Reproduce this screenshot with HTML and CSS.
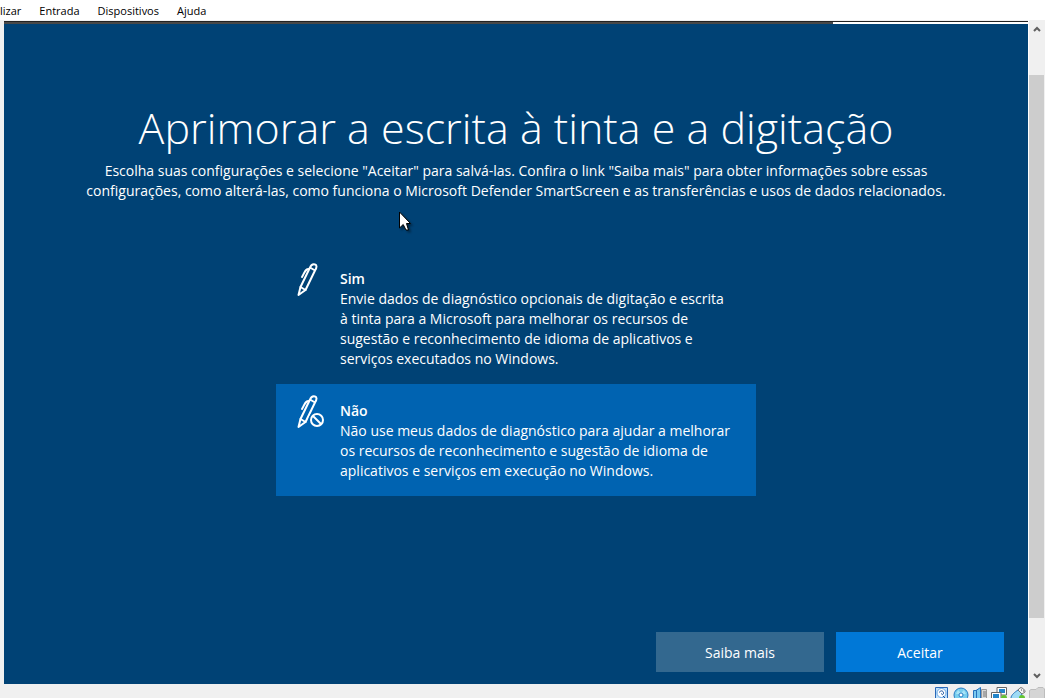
FILE: index.html
```html
<!DOCTYPE html>
<html lang="pt-BR">
<head>
<meta charset="utf-8">
<title>Aprimorar a escrita à tinta e a digitação</title>
<link rel="stylesheet" href="styles.css">
</head>
<body>
<nav class="menu">
  <button type="button" class="menu-item">lizar</button>
  <button type="button" class="menu-item">Entrada</button>
  <button type="button" class="menu-item">Dispositivos</button>
  <button type="button" class="menu-item">Ajuda</button>
</nav>
<div class="viewport">
  <main class="screen">
    <div class="topline"><div class="topline-dark"></div></div>
    <form class="setup">
      <h1 class="title">Aprimorar a escrita à tinta e a digitação</h1>
      <p class="intro">Escolha suas configurações e selecione "Aceitar" para salvá-las. Confira o link "Saiba mais" para obter informações sobre essas<br>configurações, como alterá-las, como funciona o Microsoft Defender SmartScreen e as transferências e usos de dados relacionados.</p>
      <div class="options">
        <label class="option">
          <input class="option-input" type="radio" name="ink" value="sim">
          <svg class="option-icon" viewBox="0 0 32 36" fill="none" stroke="#fff" stroke-width="2" stroke-linejoin="round" stroke-linecap="round">
            <path d="M14 4.500L19 7.500M14 4.500C15 2 17 1 19 1.500C21 2 21 4.500 19 7.500L9.500 27L2.500 32L4.500 24Z"/>
            <path d="M4.500 24L9.500 27M13 6C9 6 9 9 6 14"/>
          </svg>
          <span class="option-text"><strong class="option-name">Sim</strong>Envie dados de diagnóstico opcionais de digitação e escrita<br>à tinta para a Microsoft para melhorar os recursos de<br>sugestão e reconhecimento de idioma de aplicativos e<br>serviços executados no Windows.</span>
        </label>
        <label class="option">
          <input class="option-input" type="radio" name="ink" value="nao" checked>
          <svg class="option-icon" viewBox="0 0 32 36" fill="none" stroke="#fff" stroke-width="2" stroke-linejoin="round" stroke-linecap="round">
            <path d="M14 4.500L19 7.500M14 4.500C15 2 17 1 19 1.500C21 2 21 4.500 19 7.500L9.500 27L2.500 32L4.500 24Z"/>
            <path d="M4.500 24L9.500 27M13 6C9 6 9 9 6 14"/>
            <circle class="option-badge" cx="21" cy="25" r="8.500" stroke="none"/>
            <circle cx="21" cy="25" r="6"/>
            <path d="M17 21L25 29"/>
          </svg>
          <span class="option-text"><strong class="option-name">Não</strong>Não use meus dados de diagnóstico para ajudar a melhorar<br>os recursos de reconhecimento e sugestão de idioma de<br>aplicativos e serviços em execução no Windows.</span>
        </label>
      </div>
      <div class="actions">
        <button type="button" class="action">Saiba mais</button>
        <button type="button" class="action action-primary">Aceitar</button>
      </div>
    </form>
    <svg class="cursor" viewBox="0 0 12 20"><path d="M.500 1V17L4.200 13.500L7 19H9.500L7.500 12.500H11.500Z" fill="#fff" stroke="#000"/></svg>
  </main>
  <div class="scrollbar">
    <button type="button" class="scroll-button" aria-label="Rolar para cima"><svg class="scroll-arrow" viewBox="0 0 8 6"><path d="M1 5L4 2L7 5" fill="none" stroke="#606060" stroke-width="2"/></svg></button>
    <div class="scroll-track"><div class="scroll-thumb"></div></div>
    <button type="button" class="scroll-button" aria-label="Rolar para baixo"><svg class="scroll-arrow" viewBox="0 0 8 6"><path d="M1 1L4 4L7 1" fill="none" stroke="#606060" stroke-width="2"/></svg></button>
  </div>
</div>
<footer class="status">
  <svg class="status-icon" viewBox="0 0 16 11"><path d="M1.500 12V.500H13.500V12" fill="#bfe0fa" stroke="#2868b8"/><circle cx="7.500" cy="6" r="4.500" fill="#fff" stroke="#6aa6e4"/><path d="M5.500 5.500C6 3 9.500 3.500 9.500 6C9.500 8 7.500 8 7.500 6.500" fill="none" stroke="#174f9c"/><path d="M9 9L11 11" stroke="#174f9c"/></svg>
  <svg class="status-icon" viewBox="0 0 16 11"><circle cx="8" cy="8" r="7" fill="#78ceee" stroke="#247bc3"/><path d="M3 7L5 3L8 6L11 3L13 7Z" fill="#a8e4f7"/><circle cx="8" cy="8" r="2" fill="#fff" stroke="#247bc3"/></svg>
  <svg class="status-icon" viewBox="0 0 16 11"><path d="M9.500 2.500H14.500V12H9.500Z" fill="#d8d8d8" stroke="#999"/><path d="M11 5H14M11 7H14M11 9H14" stroke="#777"/><path d="M1.500 3.500H4L8.500 .500V12H1.500Z" fill="#79c9ef" stroke="#2470bd"/><path d="M4.500 3V11" stroke="#2470bd"/></svg>
  <svg class="status-icon" viewBox="0 0 16 11"><path d="M6 .500H15.500V8H6Z" fill="#fff" stroke="#666"/><path d="M8 2H14V6H8Z" fill="#2385c9"/><path d="M.500 5.500H10V12H.500Z" fill="#fff" stroke="#666"/><path d="M2 7H8V11H2Z" fill="#2385c9"/><circle cx="13" cy="11" r="3" fill="#62c331"/></svg>
  <svg class="status-icon" viewBox="0 0 16 11"><path d="M1 11C1 8 5 5 8 3L12 7L9 12H1Z" fill="#9edbf5" stroke="#2877bd"/><path d="M8 3L10 .800H12L15 3.500V5L12 7Z" fill="#f5f5f5" stroke="#777"/><path d="M11 3H12M13 4H14" stroke="#555"/><circle cx="12" cy="11" r="3" fill="#62c331"/></svg>
  <svg class="status-icon" viewBox="0 0 16 11"><path d="M.500 12V3.500L2 2.500H7L9 .500H14L15.500 2V12" fill="#d5d5d5" stroke="#bdbdbd"/></svg>
</footer>
</body>
</html>
```
FILE: styles.css
```css
* { box-sizing: border-box; }
body {
  margin: 0;
  height: 100vh;
  display: flex;
  flex-direction: column;
  overflow: hidden;
  background: #f0f0f0;
  font: 14px/20px "Segoe UI", "Open Sans", "Noto Sans", sans-serif;
}
button { border: 0; padding: 0; font: inherit; }
.menu { display: flex; gap: 18px; height: 20px; flex: none; padding-top: 1px; background: #fff; }
.menu-item { background: none; color: #000; font-size: 11px; line-height: 20px; }
.viewport { flex: 1; min-height: 0; display: flex; padding-left: 4px; }
.screen {
  position: relative;
  flex: 1;
  display: flex;
  flex-direction: column;
  margin-top: 1px;
  border-top: 1px solid #222;
  background: #004275;
  color: #fff;
}
.topline { height: 2px; flex: none; background: #fff; }
.topline-dark { width: 81%; height: 2px; background: #484848; }
.setup { flex: 1; display: flex; flex-direction: column; padding: 74px 24px 12px; }
.title { margin: 0 0 3px; font-size: 43px; line-height: 60px; font-weight: 300; text-align: center; white-space: nowrap; }
.intro { margin: 0; text-align: center; white-space: nowrap; }
.options { width: 480px; margin: 51px auto 0; }
.option { display: flex; gap: 16px; padding: 17px 20px 15px; }
.option:has(:checked) { background: #0063b1; }
.option-input { position: absolute; opacity: 0; }
.option-icon { width: 32px; height: 36px; flex: none; margin: -6px -4px 0 0; }
.option-badge { fill: #0063b1; }
.option-text { white-space: nowrap; }
.option-name { display: block; font-weight: 600; }
.actions { display: flex; justify-content: flex-end; gap: 12px; margin-top: auto; }
.action { width: 168px; height: 40px; padding-top: 2px; background: #33688f; color: #fff; }
.action-primary { background: #0078d7; }
.cursor { position: absolute; left: 395px; top: 189px; width: 12px; height: 20px; filter: drop-shadow(2px 2px 1px rgba(0, 0, 0, .4)); }
.scrollbar { width: 17px; flex: none; display: flex; flex-direction: column; padding-right: 1px; background: #f0f0f0; border-left: 1px solid #fff; }
.scroll-button { height: 17px; flex: none; background: none; line-height: 0; }
.scroll-arrow { width: 8px; height: 6px; }
.scroll-track { flex: 1; padding: 38px 0 49px; }
.scroll-thumb { height: 100%; background: #cdcdcd; }
.status { height: 14px; flex: none; display: flex; justify-content: flex-end; align-items: flex-end; gap: 3px; }
.status-icon { width: 16px; height: 11px; }
```
